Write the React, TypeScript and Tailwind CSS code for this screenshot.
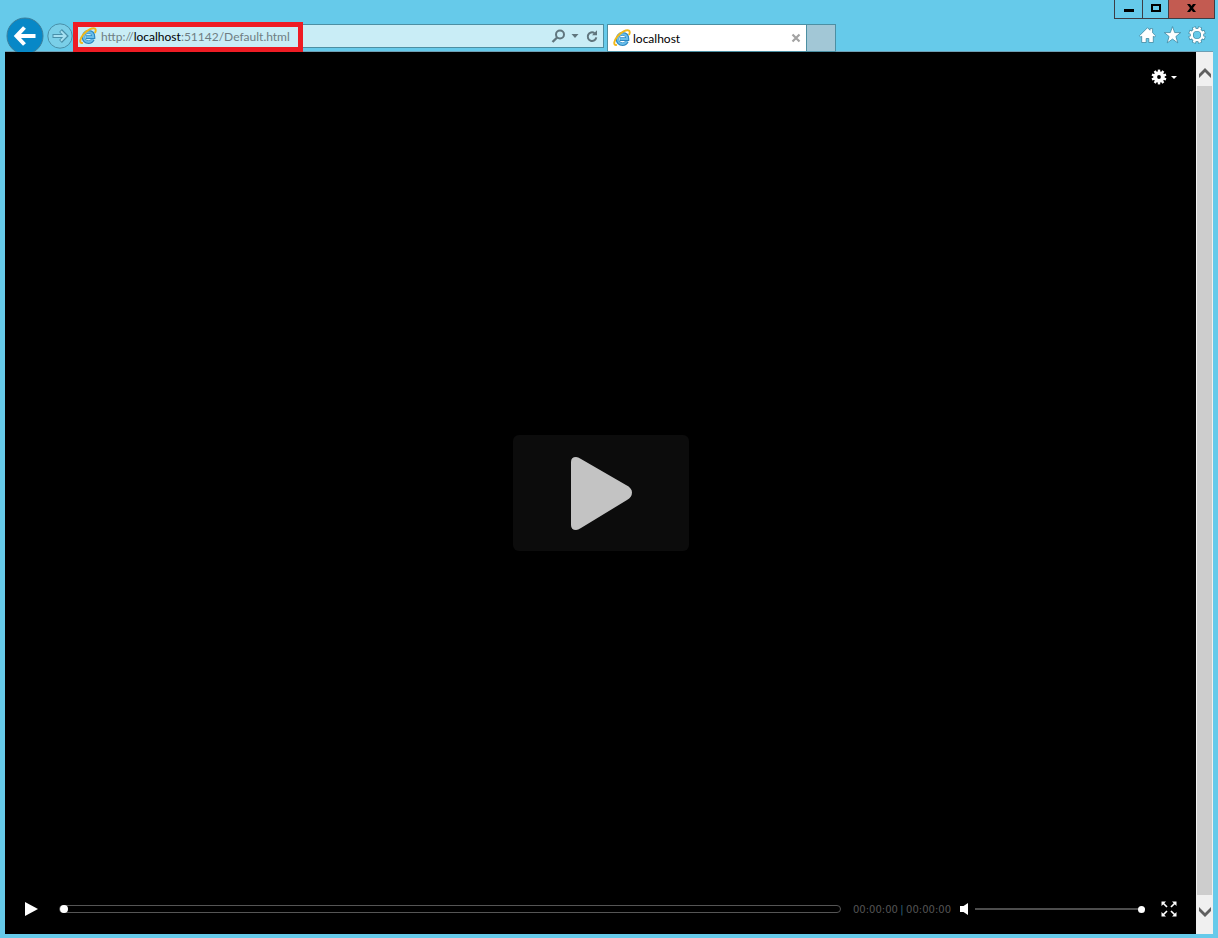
import React from "react";

function IELogo() {
  return (
    <svg viewBox="0 0 18 18" className="size-[18px] shrink-0" fill="none" aria-hidden="true">
      <path d="M14 12.300c-.9 1.900-2.500 2.900-4.500 2.900-3 0-5-2.100-5-5.100s2.100-5.200 5-5.200c3.100 0 5 2 5 5.200H7" stroke="#2a86c0" strokeWidth="3.600" />
      <path d="M13.800 12.300c-.9 1.700-2.400 2.600-4.300 2.600-2.800 0-4.700-2-4.700-4.800s1.900-4.900 4.700-4.900c2.900 0 4.700 1.900 4.700 4.800H7.200" stroke="#68bdea" strokeWidth="2" />
      <path d="M3.200 16C.2 16.200.8 11.800 4.200 7.600 7.800 3.200 13.800.2 15.900 1.600c1.100.8 1 2.200.3 3.700" stroke="#f0b81c" strokeWidth="1.900" strokeLinecap="round" />
    </svg>
  );
}

const teeth = [0, 45, 90, 135, 180, 225, 270, 315];

function ToolsIcon() {
  return (
    <svg viewBox="0 0 18 18" className="size-[18px]" aria-hidden="true">
      <g stroke="#3f87a0" strokeWidth="4">
        {teeth.map((a) => (
          <path key={a} d="M9 4V.4" transform={`rotate(${a + 22.5} 9 9)`} />
        ))}
        <circle cx="9" cy="9" r="5.200" fill="none" strokeWidth="3.600" />
      </g>
      <g stroke="#fff" strokeWidth="2.600">
        {teeth.map((a) => (
          <path key={a} d="M9 4V1" transform={`rotate(${a + 22.5} 9 9)`} />
        ))}
        <circle cx="9" cy="9" r="5.200" fill="none" strokeWidth="2.300" />
      </g>
    </svg>
  );
}

function SettingsIcon() {
  return (
    <svg viewBox="0 0 16 16" className="size-4" aria-hidden="true">
      <g stroke="#fff" strokeWidth="2.400">
        {[0, 36, 72, 108, 144, 180, 216, 252, 288, 324].map((a) => (
          <path key={a} d="M8 4V.6" transform={`rotate(${a} 8 8)`} />
        ))}
        <circle cx="8" cy="8" r="3.800" fill="none" strokeWidth="3.800" />
      </g>
    </svg>
  );
}

function WindowControls() {
  return (
    <div className="absolute top-0 right-[3px] flex h-[19px] border-x border-b border-[#3d3d45]">
      <button aria-label="Minimize" className="flex w-7 items-end justify-center border-r border-[#3d3d45] pb-[6px]">
        <span className="h-[3px] w-[10px] bg-black" />
      </button>
      <button aria-label="Maximize" className="flex w-[26px] items-start justify-center border-r border-[#3d3d45] pt-1">
        <span className="h-2 w-[10px] border-2 border-black" />
      </button>
      <button aria-label="Close" className="flex w-[45px] items-center justify-center bg-[#c35b51] pb-[2px]">
        <svg viewBox="0 0 9 8" className="h-2 w-[9px]" aria-hidden="true">
          <path d="M0 0h3l1.500 2L6 0h3L6 4l3 4H6L4.500 6 3 8H0l3-4z" fill="#000" />
        </svg>
      </button>
    </div>
  );
}

function AddressBar() {
  return (
    <form className="relative mb-1 flex h-6 min-w-0 max-w-[531px] flex-1 items-center border border-[#4c8fa3] bg-[#c9edf6] pr-1 pl-[5px]">
      <IELogo />
      <label className="relative ml-1 flex h-full min-w-0 flex-1 items-center pt-[2px] font-[Lato,sans-serif]">
        <input
          aria-label="Address"
          defaultValue="http://localhost:51142/Default.html"
          className="peer w-full bg-transparent text-[12px] leading-4 text-transparent outline-none focus:text-black"
        />
        <span className="pointer-events-none absolute left-0 text-[12px] leading-4 whitespace-nowrap text-[#6f7e83] peer-focus:hidden">
          http://<span className="text-black">localhost</span>:51142/Default.html
        </span>
      </label>
      <button type="button" aria-label="Search">
        <svg viewBox="0 0 16 16" className="size-4" fill="none" stroke="#60767e" strokeWidth="2" aria-hidden="true">
          <circle cx="10" cy="6.500" r="4" />
          <path d="M7.100 9.500 2.500 14" strokeWidth="2.400" />
        </svg>
      </button>
      <button type="button" aria-label="Show address list" className="ml-[3px] flex w-3 justify-center">
        <svg viewBox="0 0 8 4" className="h-1 w-2" aria-hidden="true">
          <path d="M.5 0h7L4 4z" fill="#60767e" />
        </svg>
      </button>
      <button type="button" aria-label="Refresh" className="ml-1">
        <svg viewBox="0 0 14 14" className="size-[14px]" fill="none" aria-hidden="true">
          <path d="M9.500 4.100A4.300 4.300 0 1 0 11.300 8.400" stroke="#60767e" strokeWidth="2" />
          <path d="M7 6.200h5V1.200z" fill="#60767e" />
        </svg>
      </button>
      <div className="pointer-events-none absolute -top-[3px] -left-px h-[30px] w-[230px] border-[5px] border-[#ee1c24]" />
    </form>
  );
}

function BrowserHeader() {
  return (
    <header className="relative flex h-[52px] shrink-0 items-end overflow-hidden">
      <WindowControls />
      <div className="absolute inset-x-[5px] bottom-0 h-px bg-[#6e9fb4]" />
      <button aria-label="Back" className="relative -mb-[3px] ml-[6px] size-[38px] shrink-0">
        <svg viewBox="0 0 38 38" className="size-[38px]" fill="none" aria-hidden="true">
          <circle cx="19" cy="19" r="18" fill="#0788c7" stroke="#3d7f9b" />
          <path d="M29.500 19H11M18.500 10.500 10.500 19l8 8.500" stroke="#fff" strokeWidth="4" />
        </svg>
      </button>
      <button aria-label="Forward" className="relative mb-[3px] ml-[3px] size-[26px] shrink-0 self-end">
        <svg viewBox="0 0 26 26" className="size-[26px]" fill="none" aria-hidden="true">
          <circle cx="13" cy="13" r="12.200" fill="#7acfe8" stroke="#498fa8" />
          <path d="M5.500 13H18M13.500 7.500 19 13l-5.500 5.500" stroke="#4890aa" strokeWidth="4" />
          <path d="M6.500 13h11M13.900 8.200 18.600 13l-4.700 4.800" stroke="#a5e0f1" strokeWidth="2" />
        </svg>
      </button>
      <AddressBar />
      <div className="relative ml-[3px] flex h-7 w-[200px] shrink-0 items-center border border-[#4c8fa3] bg-white px-[5px]">
        <IELogo />
        <a href="#localhost" className="ml-[2px] flex-1 pt-[2px] font-[Lato,sans-serif] text-[12px] leading-4 text-black">localhost</a>
        <button aria-label="Close tab">
          <svg viewBox="0 0 10 10" className="size-[10px]" aria-hidden="true">
            <path d="m1.500 1.500 7 7m0-7-7 7" stroke="#a3a3a3" strokeWidth="2.200" />
          </svg>
        </button>
      </div>
      <button aria-label="New tab" className="relative h-7 w-[29px] shrink-0 border border-l-0 border-[#4c8fa3] bg-[#a2c7d6]" />
      <div className="mb-2 ml-auto flex shrink-0 items-center gap-[7px] pr-3">
        <button aria-label="Home">
          <svg viewBox="0 0 18 18" className="size-[18px]" aria-hidden="true">
            <path d="M9.500 1.700 12 4.200V2.600h2.600v4.200l2.900 2.900-1.200 1.500-1-.9v6.200h-4.500v-4H8.200v4H3.700v-6.200l-1 .9-1.200-1.500z" fill="#fff" stroke="#3f87a0" strokeWidth=".8" />
          </svg>
        </button>
        <button aria-label="Favorites">
          <svg viewBox="0 0 18 18" className="size-[18px]" aria-hidden="true">
            <path d="m9.500.6 2.200 6h6l-4.800 3.900 1.900 6.400-5.300-3.800-5.300 3.800 1.900-6.400L1.300 6.600h6z" fill="#fff" stroke="#3f87a0" strokeWidth=".8" />
          </svg>
        </button>
        <button aria-label="Tools">
          <ToolsIcon />
        </button>
      </div>
    </header>
  );
}

function ControlBar() {
  return (
    <div className="flex h-[50px] shrink-0 items-center pr-[19px] pl-5">
      <button aria-label="Play">
        <svg viewBox="0 0 13 14" className="h-[14px] w-[13px]" aria-hidden="true">
          <path d="M0 0v14l13-7z" fill="#fff" />
        </svg>
      </button>
      <input
        type="range"
        aria-label="Seek"
        min={0}
        max={100}
        defaultValue={0}
        className="ml-[21px] h-2 min-w-0 flex-1 appearance-none rounded-full border border-[#555] bg-black [&::-webkit-slider-thumb]:size-2 [&::-webkit-slider-thumb]:appearance-none [&::-webkit-slider-thumb]:rounded-full [&::-webkit-slider-thumb]:bg-white"
      />
      <div className="ml-3 flex w-[98px] shrink-0 justify-between pt-[2px] font-['DejaVu_Sans',sans-serif] text-[10px] leading-4 text-[#555]">
        <span>00:00:00</span>
        <span className="text-[#2b6480]">|</span>
        <span>00:00:00</span>
      </div>
      <button aria-label="Mute" className="ml-[9px]">
        <svg viewBox="0 0 9 12" className="h-3 w-[9px]" aria-hidden="true">
          <path d="M0 3h3.500L8 0v12L3.500 9H0z" fill="#fff" />
        </svg>
      </button>
      <input
        type="range"
        aria-label="Volume"
        min={0}
        max={100}
        defaultValue={100}
        className="ml-[6px] h-[2px] w-[170px] shrink-0 appearance-none bg-[#4d4d4d] [&::-webkit-slider-thumb]:size-[7px] [&::-webkit-slider-thumb]:appearance-none [&::-webkit-slider-thumb]:rounded-full [&::-webkit-slider-thumb]:bg-white"
      />
      <button aria-label="Full screen" className="ml-4">
        <svg viewBox="0 0 16 16" className="size-4" aria-hidden="true">
          <path d="M.5.500h4.500L.5 5zM15.500.500V5L11 .5zM.5 15.500V11L5 15.500zM15.500 15.500H11l4.500-4.500z" fill="#fff" />
          <path d="m2 2 4 4M14 2l-4 4M2 14l4-4M14 14l-4-4" stroke="#fff" strokeWidth="1.700" />
        </svg>
      </button>
    </div>
  );
}

function Player() {
  return (
    <main className="flex min-w-0 flex-1 flex-col bg-black">
      <div className="flex h-[50px] shrink-0 items-center justify-end pr-[19px]">
        <button aria-label="Settings" className="flex items-center gap-1">
          <SettingsIcon />
          <svg viewBox="0 0 6 3" className="h-[3px] w-[6px]" aria-hidden="true">
            <path d="M0 0h6L3 3z" fill="#fff" />
          </svg>
        </button>
      </div>
      <div className="flex flex-1 items-center justify-center">
        <button aria-label="Play video" className="flex h-[116px] w-44 items-center justify-center rounded-md bg-[#0c0c0c] pt-[2px] pl-[2px]">
          <svg viewBox="0 0 62 74" className="h-[74px] w-[62px]" aria-hidden="true">
            <path d="M0 5Q0 0 5 0Q7 0 10 2L55 28Q61 31 61 35.500Q61 40 56 43L10 71Q7 73 5 73Q0 73 0 68z" fill="#c3c3c3" />
          </svg>
        </button>
      </div>
      <ControlBar />
    </main>
  );
}

function ScrollBar() {
  return (
    <aside aria-label="Page scroll" className="flex w-[17px] shrink-0 flex-col bg-[#f0f0f0]">
      <button aria-label="Scroll up" className="flex h-[34px] items-center justify-center pt-2">
        <svg viewBox="0 0 12 10" className="h-[10px] w-3" aria-hidden="true">
          <path d="M6 0l6 6v4L6 4 0 10V6z" fill="#606060" />
        </svg>
      </button>
      <div className="mx-px flex-1 bg-[#cdcdcd]" />
      <button aria-label="Scroll down" className="flex h-[39px] items-center justify-center pb-[6px]">
        <svg viewBox="0 0 12 10" className="h-[10px] w-3" aria-hidden="true">
          <path d="M6 10L0 4V0l6 6 6-6v4z" fill="#606060" />
        </svg>
      </button>
    </aside>
  );
}

export default function App() {
  return (
    <div className="flex min-h-screen flex-col bg-[#66caea] pb-1 font-['Noto_Sans',sans-serif]">
      <BrowserHeader />
      <div className="mx-[5px] flex flex-1">
        <Player />
        <ScrollBar />
      </div>
    </div>
  );
}
